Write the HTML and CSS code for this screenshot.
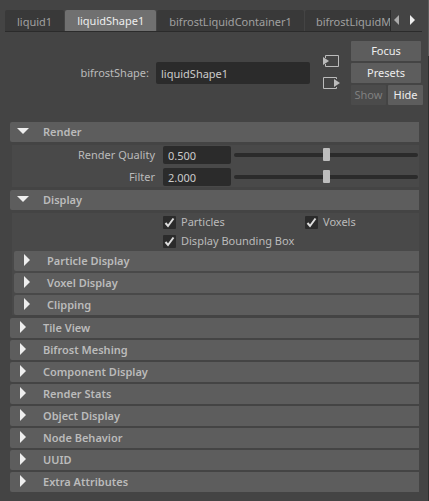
FILE: index.html
```
<!DOCTYPE html>
<html lang="en">
<head>
<meta charset="utf-8">
<title>Attribute Editor</title>
<link rel="stylesheet" href="styles.css">
</head>
<body>
<svg class="defs" aria-hidden="true">
  <symbol id="arrow" viewBox="0 0 12 12"><path d="M3 0v12l6-6z"/></symbol>
  <symbol id="arrow-down" viewBox="0 0 12 12"><path d="M0 3h12L6 9z"/></symbol>
</svg>
<main class="editor">
  <nav class="tabbar">
    <div class="tabs" role="tablist">
      <button class="tab" role="tab">liquid1</button>
      <button class="tab active" role="tab" aria-selected="true">liquidShape1</button>
      <button class="tab" role="tab">bifrostLiquidContainer1</button>
      <button class="tab last" role="tab">bifrostLiquidM</button>
    </div>
    <div class="pager">
      <button class="page muted" aria-label="Previous tab"><svg viewBox="0 0 6 10"><path d="M5 0v10L0 5z"/></svg></button>
      <button class="page" aria-label="Next tab"><svg viewBox="0 0 6 10"><path d="M0 0v10l5-5z"/></svg></button>
    </div>
  </nav>

  <header class="node">
    <label class="node-label" for="node">bifrostShape:</label>
    <input class="field node-field" id="node" type="text" value="liquidShape1">
    <div class="links">
      <button class="link" aria-label="Input connection"><svg viewBox="0 0 17 14"><path class="box" d="M2.500 4V1.500H15.500V12.500H2.500V10"/><path class="tip" d="M0 3l6 4-6 4z"/></svg></button>
      <button class="link" aria-label="Output connection"><svg viewBox="0 0 17 14"><path class="box" d="M13.500 3V1.500H.5V12.500H13.500V11"/><path class="tip" d="M11 3l6 4-6 4z"/></svg></button>
    </div>
    <div class="actions">
      <button class="btn wide">Focus</button>
      <button class="btn wide">Presets</button>
      <div class="pair">
        <button class="btn" disabled>Show</button>
        <button class="btn">Hide</button>
      </div>
    </div>
  </header>

  <div class="sections">
    <details open>
      <summary><svg><use href="#arrow-down"/></svg>Render</summary>
      <div class="body sliders">
        <div class="row">
          <label for="quality">Render Quality</label>
          <input class="field number" id="quality" type="text" value="0.500">
          <input class="slider" type="range" min="0" max="100" value="50" aria-label="Render Quality">
        </div>
        <div class="row">
          <label for="filter">Filter</label>
          <input class="field number" id="filter" type="text" value="2.000">
          <input class="slider" type="range" min="0" max="100" value="50" aria-label="Filter">
        </div>
      </div>
    </details>
    <details open>
      <summary><svg><use href="#arrow-down"/></svg>Display</summary>
      <div class="body">
        <div class="checks">
          <label><input type="checkbox" checked>Particles</label>
          <label><input type="checkbox" checked>Voxels</label>
          <label class="span"><input type="checkbox" checked>Display Bounding Box</label>
        </div>
        <div class="nested">
          <details><summary><svg><use href="#arrow"/></svg>Particle Display</summary></details>
          <details><summary><svg><use href="#arrow"/></svg>Voxel Display</summary></details>
          <details><summary><svg><use href="#arrow"/></svg>Clipping</summary></details>
        </div>
      </div>
    </details>
    <div class="closed">
      <details><summary><svg><use href="#arrow"/></svg>Tile View</summary></details>
      <details><summary><svg><use href="#arrow"/></svg>Bifrost Meshing</summary></details>
      <details><summary><svg><use href="#arrow"/></svg>Component Display</summary></details>
      <details><summary><svg><use href="#arrow"/></svg>Render Stats</summary></details>
      <details><summary><svg><use href="#arrow"/></svg>Object Display</summary></details>
      <details><summary><svg><use href="#arrow"/></svg>Node Behavior</summary></details>
      <details><summary><svg><use href="#arrow"/></svg>UUID</summary></details>
      <details><summary><svg><use href="#arrow"/></svg>Extra Attributes</summary></details>
    </div>
  </div>
</main>
<div class="edge" aria-hidden="true"><div class="edge-thumb"></div></div>
</body>
</html>
```
FILE: styles.css
```
* { box-sizing: border-box; }

body {
  display: flex;
  min-height: 100vh;
  margin: 0;
  background: #444;
  color: #bbb;
  font: 11px/16px "Noto Sans", "Open Sans", sans-serif;
}

button, input {
  margin: 0;
  border: 0;
  padding: 0;
  font: inherit;
  color: inherit;
}

.defs { display: none; }

.editor {
  flex: 1;
  min-width: 0;
  padding: 10px 5px 8px 5px;
}

.edge { width: 1px; background: #2f2f2f; }
.edge-thumb { height: 56px; background: #5d5d5d; }

.tabbar {
  display: flex;
  margin-right: 1px;
  border-bottom: 1px solid #2b2b2b;
}

.tabs {
  display: flex;
  flex: 1;
  gap: 1px;
  min-width: 0;
  overflow: hidden;
  border-right: 1px solid #2b2b2b;
}

.tab {
  flex: none;
  height: 21px;
  padding: 3px 12px 0;
  border-radius: 2px 2px 0 0;
  background: #393939;
  color: #a0a0a0;
}

.tab.active {
  padding: 1px 12px 0;
  background: #707070;
  color: #eee;
}

.tab.last {
  flex: 1;
  padding: 3px 0 0 11px;
  text-align: left;
}

.pager {
  display: flex;
  gap: 10px;
  align-items: center;
  padding: 0 6px 2px 3px;
}

.page { display: flex; background: none; }
.page svg { width: 6px; height: 10px; fill: #eee; }
.page.muted svg { fill: #aaa; }

.node {
  display: flex;
  margin-top: 9px;
}

.node-label {
  width: 144px;
  margin-top: 24px;
  text-align: right;
}

.field {
  border-radius: 2px;
  background: #2b2b2b;
  color: #ccc;
}

.node-field {
  flex: 1;
  min-width: 0;
  height: 22px;
  margin: 21px 13px 0 7px;
  padding: 1px 5px 0;
}

.links {
  display: flex;
  flex-direction: column;
  gap: 8px;
  margin: 13px 11px 0 0;
}

.link { display: flex; background: none; }
.link svg { width: 17px; height: 14px; }
.box { fill: none; stroke: #bbb; }
.tip { fill: #bbb; }

.actions {
  display: flex;
  flex-direction: column;
  gap: 2px;
  width: 72px;
}

.pair { display: flex; gap: 2px; }

.btn {
  flex: 1;
  height: 20px;
  border-radius: 1px;
  background: #5d5d5d;
  color: #eee;
}

.wide { flex: none; width: 70px; }
.btn:disabled { background: #4b4b4b; color: #808080; }

.sections {
  display: grid;
  gap: 3px;
  margin: 17px 4px 0 5px;
}

summary {
  display: flex;
  align-items: center;
  height: 20px;
  padding-left: 7px;
  border-radius: 2px 0 0 2px;
  background: #5d5d5d;
  font-weight: 600;
  list-style: none;
}

summary svg {
  width: 12px;
  height: 12px;
  margin: 0 14px 2px 0;
  fill: #eee;
}

.body {
  margin: 3px 0 0 2px;
  background: #494949;
}

.sliders {
  display: grid;
  gap: 4px;
  padding: 1px 0;
}

.row { display: flex; align-items: center; }

.row label {
  width: 143px;
  margin-right: 8px;
  text-align: right;
}

.number {
  width: 68px;
  height: 18px;
  padding: 0 5px;
}

.slider {
  flex: 1;
  min-width: 0;
  height: 14px;
  margin: 0 1px 0 3px;
  appearance: none;
  background: none;
}

.slider::-webkit-slider-runnable-track {
  height: 4px;
  border-radius: 2px;
  background: #2b2b2b;
}

.slider::-webkit-slider-thumb {
  width: 7px;
  height: 13px;
  margin-top: -5px;
  appearance: none;
  border-radius: 1px;
  background: #bdbdbd;
}

.checks {
  display: grid;
  grid-template-columns: 142px 1fr;
  gap: 3px 0;
  padding: 1px 0 2px 151px;
}

.checks label { display: flex; align-items: center; gap: 5px; }
.span { grid-column: 1 / -1; }

.checks input {
  width: 13px;
  height: 13px;
  appearance: none;
  border-radius: 1px;
  background: #2b2b2b url("data:image/svg+xml,%3Csvg xmlns='http://www.w3.org/2000/svg' viewBox='0 0 13 13'%3E%3Cpath d='M2.500 7l2.500 3L10.500 2.500' fill='none' stroke='%23ddd' stroke-width='2'/%3E%3C/svg%3E");
}

.nested, .closed { display: grid; gap: 2px; }
.nested { margin-left: 2px; }
```
